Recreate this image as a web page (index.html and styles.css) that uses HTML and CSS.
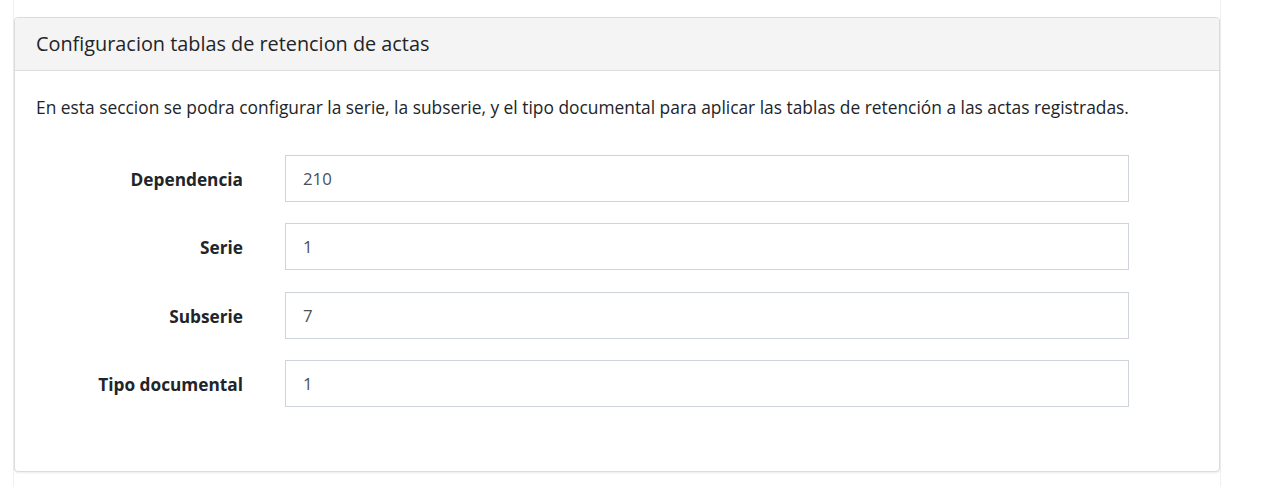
FILE: index.html
```html
<!DOCTYPE html>
<html lang="es">
<head>
<meta charset="utf-8">
<title>Configuracion tablas de retencion de actas</title>
<link rel="stylesheet" href="styles.css">
</head>
<body>
<div class="page">
  <div class="card">
    <div class="card-header">
      <h3 class="card-title">Configuracion tablas de retencion de actas</h3>
    </div>
    <div class="card-body">
      <p class="intro">En esta seccion se podra configurar la serie, la subserie, y el tipo documental para aplicar las tablas de retención a las actas registradas.</p>
      <form class="form">
        <div class="form-row">
          <label class="form-label" for="dep">Dependencia</label>
          <input class="form-input" id="dep" type="text" value="210">
        </div>
        <div class="form-row">
          <label class="form-label" for="serie">Serie</label>
          <input class="form-input" id="serie" type="text" value="1">
        </div>
        <div class="form-row">
          <label class="form-label" for="sub">Subserie</label>
          <input class="form-input" id="sub" type="text" value="7">
        </div>
        <div class="form-row">
          <label class="form-label" for="tipo">Tipo documental</label>
          <input class="form-input" id="tipo" type="text" value="1">
        </div>
      </form>
    </div>
  </div>
</div>
</body>
</html>
```
FILE: styles.css
```css
* { box-sizing: border-box; }
html, body {
  margin: 0;
  padding: 0;
  background: #ffffff;
  height: 100%;
}
body {
  font-family: "Open Sans", "Liberation Sans", sans-serif;
  color: #212529;
  font-size: 16px;
}
.page {
  margin-left: 13px;
  width: 1208px;
  min-height: 487px;
  border-left: 1px solid #f0f0f0;
  border-right: 1px solid #f0f0f0;
  padding-top: 17px;
}
.card {
  background: #fff;
  border: 1px solid #dcdcdc;
  border-radius: 4px;
  box-shadow: 0 1px 2px rgba(0,0,0,0.08);
  height: 455px;
  display: flex;
  flex-direction: column;
}
.card-header {
  background: #f4f4f4;
  border-bottom: 1px solid #dedede;
  border-radius: 4px 4px 0 0;
  height: 53px;
  padding: 0 21px 1px;
  display: flex;
  align-items: center;
}
.card-title {
  margin: 0;
  font-size: 19.85px;
  font-weight: 400;
  color: #212529;
}
.card-body {
  padding: 23px 21px;
}
.intro {
  margin: 0 0 35px;
  font-size: 17.36px;
  line-height: 26px;
}
.form {
  display: flex;
  flex-direction: column;
  gap: 21.33px;
}
.form-row {
  display: grid;
  grid-template-columns: 207px 844px;
  column-gap: 42px;
  align-items: center;
}
.form-label {
  text-align: right;
  font-weight: 700;
  font-size: 17.25px;
  padding-top: 2px;
}
.form-input {
  height: 47px;
  border: 1px solid #ced4da;
  border-radius: 0;
  padding: 0 17px;
  font-family: inherit;
  font-size: 16.8px;
  color: #495057;
  background: #fff;
  outline: none;
}
```
